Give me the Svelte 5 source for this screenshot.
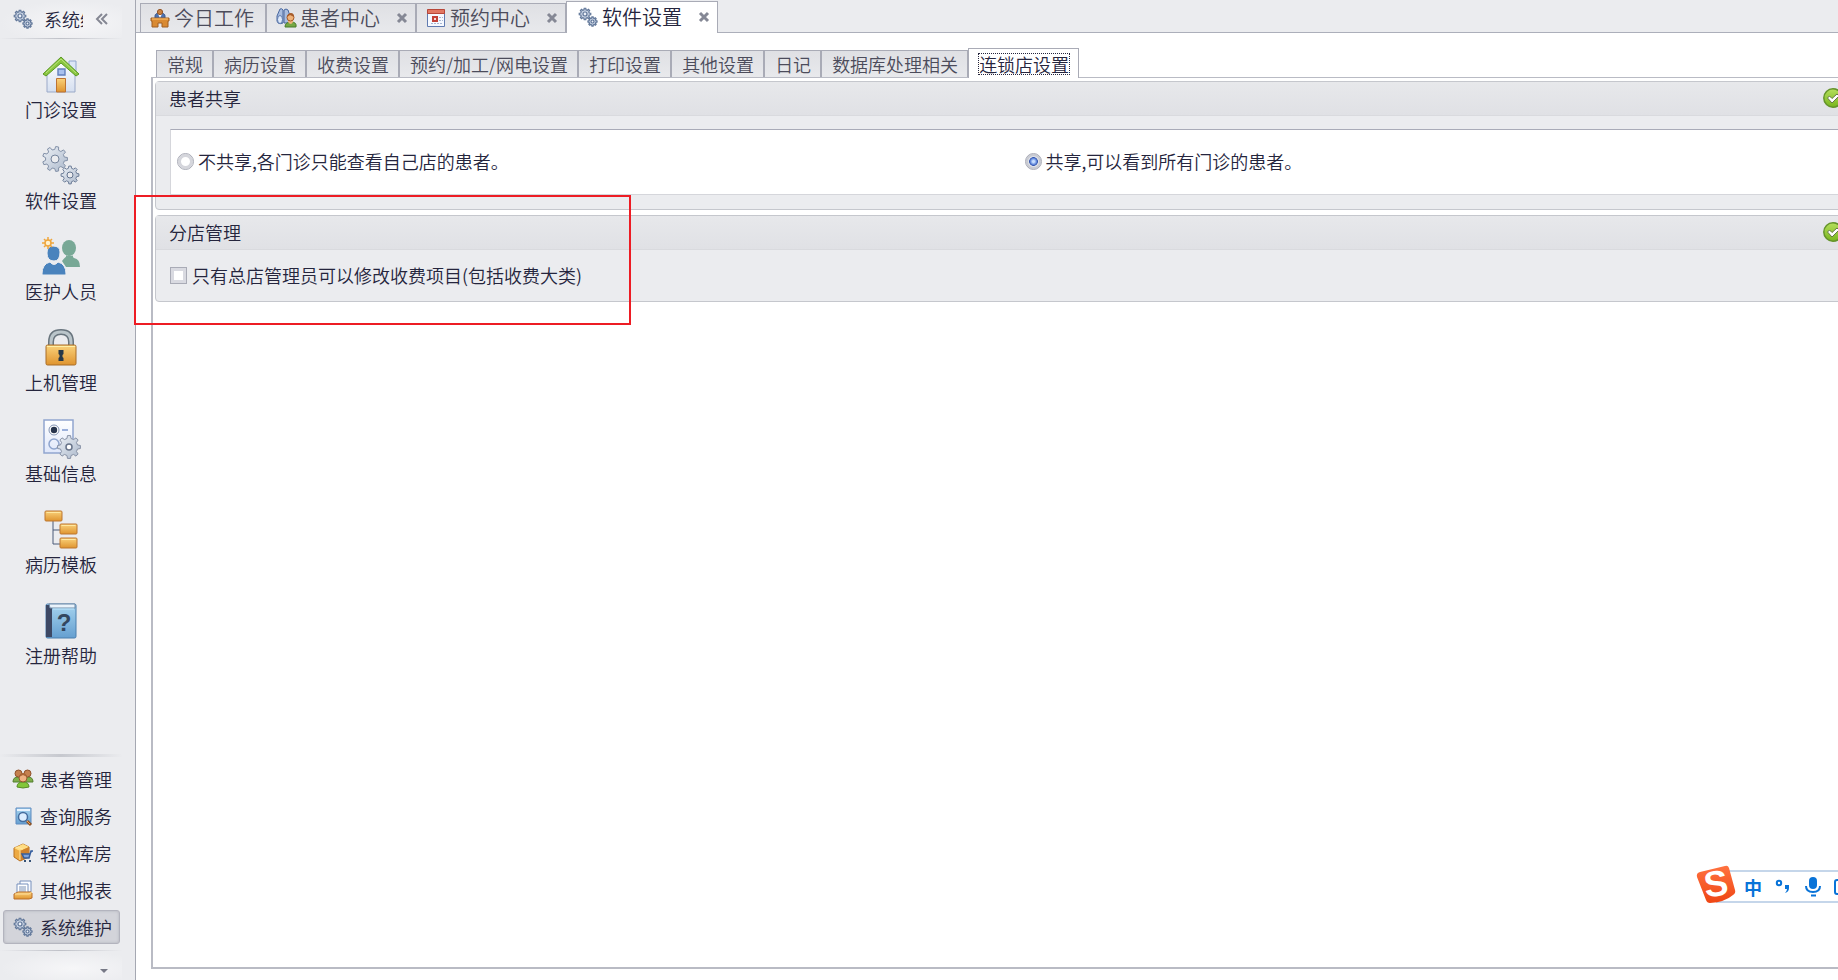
<script lang="ts">
  type Item = { id: string; label: string };
  type PageTab = Item & { icon: string; closable: boolean };

  const shortcuts: Item[] = [
    { id: "house", label: "门诊设置" },
    { id: "gears", label: "软件设置" },
    { id: "staff", label: "医护人员" },
    { id: "lock", label: "上机管理" },
    { id: "form", label: "基础信息" },
    { id: "tree", label: "病历模板" },
    { id: "book", label: "注册帮助" },
  ];

  const modules: Item[] = [
    { id: "people", label: "患者管理" },
    { id: "search", label: "查询服务" },
    { id: "box", label: "轻松库房" },
    { id: "tray", label: "其他报表" },
    { id: "cogs", label: "系统维护" },
  ];

  const pages: PageTab[] = [
    { id: "today", icon: "desk", label: "今日工作", closable: false },
    { id: "patients", icon: "finder", label: "患者中心", closable: true },
    { id: "booking", icon: "calendar", label: "预约中心", closable: true },
    { id: "software", icon: "cogs", label: "软件设置", closable: true },
  ];

  const sections = [
    "常规",
    "病历设置",
    "收费设置",
    "预约/加工/网电设置",
    "打印设置",
    "其他设置",
    "日记",
    "数据库处理相关",
    "连锁店设置",
  ];

  let activeModule = $state("cogs");
  let activePage = $state("software");
  let activeSection = $state("连锁店设置");
  let sharing = $state("all");
  let adminOnly = $state(false);

  const moduleTitle = $derived(modules.find((m) => m.id === activeModule)?.label ?? "");

  // closed outline of a cog wheel
  function gear(cx: number, cy: number, r: number, teeth = 8) {
    const points: string[] = [];
    const step = (Math.PI * 2) / teeth;
    for (let i = 0; i < teeth; i++) {
      for (const [offset, radius] of [[-0.3, 0.76], [-0.17, 1], [0.17, 1], [0.3, 0.76]]) {
        const a = (i + offset) * step;
        points.push(`${(cx + Math.cos(a) * r * radius).toFixed(2)} ${(cy + Math.sin(a) * r * radius).toFixed(2)}`);
      }
    }
    return `M${points.join("L")}Z`;
  }
</script>

{#snippet icon(id: string)}
  {#if id === "house"}
    <svg class="icon-lg" viewBox="0 0 38 38" aria-hidden="true">
      <path d="M27 6h7v14h-7z" fill="#dce6f6" stroke="#8fa6cf" />
      <path d="M5 18 19 5l14 13v19H5z" fill="url(#wall)" stroke="#9aa9c8" />
      <path d="M1 19 19 2l18 17-3 2L19 8 4 21z" fill="#8ac63f" stroke="#5c9a25" />
      <path d="m4 18 15-14 15 14" fill="none" stroke="#b9e47c" />
      <path d="M16 14h7v6h-7z" fill="#a9c1ee" stroke="#6380bd" stroke-width="1.4" />
      <path d="M14.500 23.500h9V37h-9z" fill="url(#gold)" stroke="#bd7333" />
    </svg>
  {:else if id === "gears"}
    <svg class="icon-lg" viewBox="0 0 38 38" aria-hidden="true">
      <path d={gear(13, 13, 12.5, 9)} fill="url(#steel)" stroke="#8391a8" />
      <circle cx="13" cy="13" r="4" fill="#ebecef" stroke="#75849c" />
      <path d={gear(28, 29, 9, 8)} fill="url(#steel)" stroke="#6f7f99" />
      <circle cx="28" cy="29" r="3" fill="#ebecef" stroke="#63738e" />
    </svg>
  {:else if id === "staff"}
    <svg class="icon-lg" viewBox="0 0 38 38" aria-hidden="true">
      <ellipse cx="27" cy="11" rx="7" ry="8" fill="#78a896" />
      <path d="M20 24q7-9 12-3 6 1 6 9H24z" fill="#78a896" />
      <path d="M24 18q4 5 7 0v6h-7z" fill="#78a896" />
      <g stroke="#ebecef">
        <path d="M0 37q0-10 8-12 4 5 8 0 8 2 8 12 0 1-1 1H1q-1 0-1-1z" fill="#4a83bd" />
        <path d="M5 16q0-7 6-7 7 0 7 6 0 9-6 9-7 0-7-8z" fill="#4a83bd" />
      </g>
      <path d="M6 0v12M0 6h12M2 2l8 8M10 2 2 10" stroke="#efa63d" stroke-width="1.500" />
      <circle cx="6" cy="6" r="3" fill="#fff2cf" stroke="#efa63d" stroke-width="1.500" />
    </svg>
  {:else if id === "lock"}
    <svg class="icon-lg" viewBox="0 0 38 38" aria-hidden="true">
      <path d="M9 19v-5q0-10 10-10t10 10v5" fill="none" stroke="#68747d" stroke-width="6" />
      <path d="M9 19v-5q0-10 10-10t10 10v5" fill="none" stroke="#bac5ca" stroke-width="3" />
      <rect x="4" y="17" width="30" height="20" rx="1.500" fill="url(#gold)" stroke="#a86d28" />
      <path d="M5 18.500h28" stroke="#fff0a6" />
      <path d="M16.500 22h5v4l-1 1v2l1 1v3h-5v-3l1-1v-2l-1-1z" fill="#263848" />
    </svg>
  {:else if id === "form"}
    <svg class="icon-lg" viewBox="0 0 38 38" aria-hidden="true">
      <path d="M2 1h29v33H2z" fill="url(#paper)" stroke="#91a5cf" stroke-width="1.500" />
      <circle cx="12" cy="11" r="5" fill="#fff" stroke="#8192b2" />
      <circle cx="12" cy="11" r="3.200" fill="#28354d" />
      <circle cx="12" cy="25" r="5" fill="none" stroke="#8ea4cd" stroke-width="1.500" />
      <path d="M20 11h6" stroke="#7d98cf" stroke-width="1.500" />
      <path d={gear(27, 28, 11.5, 8)} fill="url(#steel)" stroke="#8791a5" />
      <circle cx="27" cy="28" r="3" fill="#fff" stroke="#68748a" stroke-width="1.500" />
    </svg>
  {:else if id === "tree"}
    <svg class="icon-lg" viewBox="0 0 38 38" aria-hidden="true">
      <path d="M11 11v23h8M11 20h8" fill="none" stroke="#4b5b78" />
      <g fill="url(#gold)" stroke="#bd7730">
        <rect x="3" y="1" width="17" height="10" rx="1" />
        <rect x="18" y="14" width="17" height="10" rx="1" />
        <rect x="18" y="28" width="17" height="10" rx="1" />
      </g>
      <path d="M4.500 2.500h14M19.500 15.500h14M19.500 29.500h14" stroke="#ffe8a0" />
    </svg>
  {:else if id === "book"}
    <svg class="icon-lg" viewBox="0 0 38 38" aria-hidden="true">
      <rect x="4" y="3" width="30" height="34" rx="1.500" fill="url(#sky)" stroke="#4b7eae" />
      <path d="M4 4h6v32H4z" fill="#3d4864" />
      <path d="M7 3h26v4H8z" fill="#e9f3fb" stroke="#718ca9" />
      <path d="M11 8h21" stroke="#bce6fb" />
      <text x="22" y="30" class="question">?</text>
    </svg>
  {:else if id === "cogs"}
    <svg class="icon-sm" viewBox="0 0 20 20" aria-hidden="true">
      <g fill="#c6d1e2" stroke="#617799" stroke-width="1.200">
        <path d={gear(7, 7, 5.8, 8)} />
        <path d={gear(14.5, 14.5, 4.6, 8)} />
        <circle cx="7" cy="7" r="2" fill="#edf1f8" />
        <circle cx="14.500" cy="14.500" r="1.500" fill="#edf1f8" />
      </g>
    </svg>
  {:else if id === "desk"}
    <svg class="icon-sm" viewBox="0 0 20 20" aria-hidden="true">
      <path d="M5 11V8q0-3 5-3t5 3v3z" fill="#4c72af" stroke="#3c588b" />
      <path d="m8 6 2 4 2-4z" fill="#fff" />
      <circle cx="10" cy="4" r="2.600" fill="#ca8140" stroke="#935323" />
      <path d="M1 10h18v3h-1v6h-6v-4H8v4H2v-6H1z" fill="#d98a32" stroke="#a05f22" />
      <path d="M2 11h16" stroke="#ffc46f" />
    </svg>
  {:else if id === "finder"}
    <svg class="icon-sm" viewBox="0 0 20 20" aria-hidden="true">
      <path d="M1 8 4 1q2-1 3 1v13q-5 2-6-2zM8 2q2-2 4 0l2 6v7H8z" fill="#a9bddf" stroke="#48679f" />
      <ellipse cx="4" cy="11.500" rx="2.500" ry="4" fill="#dde9fa" stroke="#5b78ac" />
      <path d="M9 19q0-5 6-5t5 5z" fill="#75a744" stroke="#467b2a" />
      <path d="M12 14q3 4 5 0v-3h-5z" fill="#f0b47c" />
      <circle cx="14.500" cy="9.500" r="3.500" fill="#f0b37a" stroke="#a55a27" />
      <path d="M11 9q1-4 4-4t3 4l-4-2z" fill="#a65d2c" />
    </svg>
  {:else if id === "calendar"}
    <svg class="icon-sm" viewBox="0 0 20 20" aria-hidden="true">
      <path d="M1.500 2h17v16.500h-17z" fill="#f6f9ff" stroke="#607bb0" />
      <path d="M1.500 1.500h17v4h-17z" fill="#e27762" stroke="#b84739" />
      <path d="M5 15.500h11M13 9.500h4M13 12.500h4" stroke="#a7b7d4" stroke-dasharray="2 1" />
      <rect x="6" y="8" width="6" height="6" fill="#c34137" />
      <path d="M8.500 10.500h1v1h-1z" fill="#fff" stroke="#fff" />
    </svg>
  {:else if id === "people"}
    <svg class="icon-sm" viewBox="0 0 20 20" aria-hidden="true">
      <path d="M0 13q0-5 5-5t5 5zM10 13q0-5 5-5t5 5z" fill="#7eae4b" stroke="#537e2f" />
      <circle cx="5.500" cy="4.500" r="3.500" fill="#c5804f" stroke="#8f512b" />
      <circle cx="14.500" cy="4.500" r="3.500" fill="#c5804f" stroke="#8f512b" />
      <path d="M4 18q0-5 6-5t6 5q-6 2-12 0z" fill="#82c638" stroke="#568b27" />
      <circle cx="10" cy="9" r="4" fill="#efb182" stroke="#96572f" />
      <path d="M6 8q1-4 4-4t4 4l-4-2z" fill="#aa6638" />
    </svg>
  {:else if id === "search"}
    <svg class="icon-sm" viewBox="0 0 20 20" aria-hidden="true">
      <path d="M3 2h15v16H3z" fill="url(#sky)" stroke="#5e8bc0" />
      <path d="M4 3h13v2H4z" fill="#e8f4ff" />
      <circle cx="10" cy="11" r="4.500" fill="#dceeff" stroke="#456d9e" stroke-width="1.500" />
      <path d="m14 15 4 4" stroke="#8e5326" stroke-width="3" />
      <path d="m14 15 3 3" stroke="#f0a35c" />
    </svg>
  {:else if id === "box"}
    <svg class="icon-sm" viewBox="0 0 20 20" aria-hidden="true">
      <path d="m1 5 9-4 6 3v10l-9 4-6-4z" fill="#edaa43" stroke="#b97121" />
      <path d="m1 5 9-4 6 3-9 4z" fill="#ffdd83" />
      <path d="m7 8 9-4v10l-9 4z" fill="#ce812c" />
      <path d="m3 4 7 2M7 8v9" stroke="#ffe7a0" />
      <path d="M20 8h-2l-2 7h-5l-2-4h8" fill="#7fa3da" stroke="#365d9c" stroke-width="1.500" />
      <path d="M11 17h2v2h-2zM16 17h2v2h-2z" fill="#365276" />
    </svg>
  {:else if id === "tray"}
    <svg class="icon-sm" viewBox="0 0 20 20" aria-hidden="true">
      <path d="M7 1h11v11H7z" fill="#f8faff" stroke="#7790bc" />
      <path d="M4 4h11v10H4z" fill="#fff" stroke="#7790bc" />
      <path d="M6 7h7M6 9h7M6 11h7" stroke="#7990b6" />
      <path d="m1 14 4-2h13l1 1v5l-3 1H1z" fill="url(#gold)" stroke="#bb6f2b" />
      <path d="M2 14h14l3-2" fill="none" stroke="#ffdc99" />
    </svg>
  {/if}
{/snippet}

{#snippet confirmButton(label: string)}
  <button class="confirm-btn" aria-label={label}>
    <svg viewBox="0 0 20 20" aria-hidden="true">
      <circle cx="10" cy="10" r="9.200" fill="url(#green)" stroke="#65942b" stroke-width="1.500" />
      <path d="m4.500 10 2-2 2.500 2.500L14 6l2 2-7 7z" fill="#fff" stroke="#657746" />
    </svg>
  </button>
{/snippet}

<svg class="defs" aria-hidden="true">
  <defs>
    <linearGradient id="wall" x2="0" y2="1"><stop stop-color="#fff" /><stop offset="1" stop-color="#d5dff0" /></linearGradient>
    <linearGradient id="gold" x2="0" y2="1"><stop stop-color="#fad27b" /><stop offset="1" stop-color="#df942f" /></linearGradient>
    <linearGradient id="steel" x2="1" y2="1"><stop stop-color="#edf1f6" /><stop offset="1" stop-color="#abb8cb" /></linearGradient>
    <linearGradient id="paper" x2="0" y2="1"><stop stop-color="#fff" /><stop offset="1" stop-color="#dfe7fa" /></linearGradient>
    <linearGradient id="sky" x2="0" y2="1"><stop stop-color="#a6d4ef" /><stop offset="1" stop-color="#659fd0" /></linearGradient>
    <linearGradient id="green" x2="0" y2="1"><stop stop-color="#b5df5c" /><stop offset="1" stop-color="#79b51e" /></linearGradient>
    <linearGradient id="orange" x2="0" y2="1"><stop stop-color="#ff7240" /><stop offset="1" stop-color="#ef4614" /></linearGradient>
  </defs>
</svg>

<div class="app">
  <aside class="sidebar">
    <header class="side-header">
      {@render icon("cogs")}
      <span class="side-title">{moduleTitle}</span>
      <button class="collapse-btn" aria-label="收起">
        <svg viewBox="0 0 12 12" aria-hidden="true"><path d="M6 1 1 6l5 5M11 1 6 6l5 5" /></svg>
      </button>
    </header>

    <nav class="shortcuts">
      {#each shortcuts as item (item.id)}
        <button class="shortcut">
          {@render icon(item.id)}
          <span>{item.label}</span>
        </button>
      {/each}
    </nav>

    <nav class="modules">
      {#each modules as item (item.id)}
        <button class="module" class:active={activeModule === item.id} onclick={() => (activeModule = item.id)}>
          {@render icon(item.id)}
          <span>{item.label}</span>
        </button>
      {/each}
    </nav>
    <footer class="side-footer">
      <button class="more-btn" aria-label="更多"></button>
    </footer>
  </aside>

  <main class="main">
    <div class="page-tabs">
      {#each pages as page (page.id)}
        <div class="page-tab" class:active={activePage === page.id}>
          <button class="page-name" onclick={() => (activePage = page.id)}>
            {@render icon(page.icon)}
            <span>{page.label}</span>
          </button>
          {#if page.closable}
            <button class="close-btn" aria-label="关闭{page.label}">
              <svg viewBox="0 0 12 12" aria-hidden="true"><path d="m2 2 8 8M10 2l-8 8" /></svg>
            </button>
          {/if}
        </div>
      {/each}
    </div>

    <div class="workspace">
      <div class="section-tabs" role="tablist">
        {#each sections as name (name)}
          <button
            class="section-tab"
            class:active={activeSection === name}
            role="tab"
            aria-selected={activeSection === name}
            onclick={() => (activeSection = name)}
          >
            <span>{name}</span>
          </button>
        {/each}
      </div>

      <div class="panel">
        <section class="group">
          <header class="group-header">
            <h2>患者共享</h2>
            {@render confirmButton("保存患者共享")}
          </header>
          <div class="radio-box">
            <label class="choice">
              <input type="radio" name="sharing" value="own" bind:group={sharing} />
              <span>不共享,各门诊只能查看自己店的患者。</span>
            </label>
            <label class="choice">
              <input type="radio" name="sharing" value="all" bind:group={sharing} />
              <span>共享,可以看到所有门诊的患者。</span>
            </label>
          </div>
        </section>

        <section class="group">
          <header class="group-header">
            <h2>分店管理</h2>
            {@render confirmButton("保存分店管理")}
          </header>
          <label class="check-row">
            <input type="checkbox" bind:checked={adminOnly} />
            <span>只有总店管理员可以修改收费项目(包括收费大类)</span>
          </label>
        </section>
      </div>
    </div>
  </main>

  <div class="highlight"></div>

  <div class="ime-bar">
    <svg class="ime-logo" viewBox="0 0 40 40" aria-hidden="true">
      <path d="M4 7 29 1q3-1 4 2l6 22q1 3-2 5-8 7-23 8-3 0-4-3L1 12q-1-4 3-5z" fill="url(#orange)" />
      <text x="20" y="31" transform="rotate(-8 20 20)" class="ime-s">S</text>
    </svg>
    <button class="ime-lang">中</button>
    <button class="ime-btn" aria-label="标点">
      <svg viewBox="0 0 18 20" aria-hidden="true">
        <circle cx="5" cy="6" r="2.200" fill="none" stroke="#0873d8" stroke-width="2" />
        <path d="M11 8h4v3q0 4-4 5 2-2 2-4h-2z" fill="#0873d8" />
      </svg>
    </button>
    <button class="ime-btn" aria-label="语音">
      <svg viewBox="0 0 18 20" aria-hidden="true">
        <rect x="5" y="0" width="8" height="12" rx="4" fill="#0873d8" />
        <path d="M2 9q0 6 7 6t7-6" fill="none" stroke="#0873d8" stroke-width="2" />
        <path d="M7 18.500h5" stroke="#0873d8" stroke-width="2" />
      </svg>
    </button>
    <button class="ime-btn" aria-label="键盘">
      <svg viewBox="0 0 18 20" aria-hidden="true">
        <rect x="1" y="3" width="20" height="14" rx="2" fill="none" stroke="#0873d8" stroke-width="2" />
        <path d="M4 7h12M4 10h12M4 13h12" stroke="#0873d8" stroke-width="1.500" />
      </svg>
    </button>
  </div>
</div>

<style>
  :global(body) {
    margin: 0;
    background: #fff;
  }

  .app {
    position: relative;
    display: flex;
    min-height: 100vh;
    overflow: hidden;
    font-family: "Noto Sans CJK SC", sans-serif;
    font-size: 18px;
    font-weight: 350;
    line-height: 24px;
    color: #25253d;
  }

  button {
    margin: 0;
    padding: 0;
    border: 0;
    background: none;
    color: inherit;
    font: inherit;
    white-space: nowrap;
    cursor: pointer;
  }

  svg {
    display: block;
    overflow: visible;
    flex-shrink: 0;
  }

  .defs {
    position: absolute;
    width: 0;
    height: 0;
  }

  .icon-lg {
    width: 38px;
    height: 38px;
  }

  .icon-sm {
    width: 20px;
    height: 20px;
  }

  .question {
    font: bold 24px "Liberation Sans", sans-serif;
    text-anchor: middle;
    fill: #34475f;
  }

  .sidebar {
    display: flex;
    flex-direction: column;
    flex-shrink: 0;
    box-sizing: border-box;
    width: 136px;
    padding-right: 13px;
    border-right: 1px solid #a5a8b2;
    background: #ebecef;
  }

  .side-header {
    display: flex;
    align-items: center;
    height: 38px;
    padding-left: 13px;
    border-bottom: 1px solid;
    border-image: linear-gradient(to right, #ebecef, #bfc1c8 50%, #ebecef) 1;
    background: radial-gradient(ellipse at 60% 60%, #f6f6f8, #ebecef 70%);
  }

  .side-title {
    width: 39px;
    margin-left: 11px;
    overflow: hidden;
    white-space: nowrap;
  }

  .collapse-btn {
    margin-left: 13px;
  }

  .collapse-btn svg {
    width: 12px;
    height: 12px;
    fill: none;
    stroke: #858793;
    stroke-width: 2;
  }

  .shortcuts {
    display: flex;
    flex-direction: column;
    padding-top: 16px;
  }

  .shortcut {
    display: flex;
    flex-direction: column;
    align-items: center;
    gap: 4px;
    height: 91px;
  }

  .modules {
    display: flex;
    flex-direction: column;
    gap: 3px;
    margin-top: auto;
    padding: 5px 2px 0 3px;
    border-top: 3px double;
    border-image: linear-gradient(to right, #ebecef, #c6c8ce 50%, #ebecef) 1;
  }

  .module {
    display: flex;
    align-items: center;
    gap: 7px;
    box-sizing: border-box;
    height: 34px;
    padding-left: 9px;
    border: 1px solid transparent;
    border-radius: 3px;
  }

  .module.active {
    border-color: #b3b4be;
    background: #d3d4da;
    box-shadow: inset 0 0 3px #b1b2bb;
  }

  .side-footer {
    display: flex;
    justify-content: flex-end;
    align-items: flex-end;
    box-sizing: border-box;
    height: 30px;
    margin-top: 6px;
    padding: 0 14px 7px 0;
    border-top: 1px solid;
    border-image: linear-gradient(to right, #ebecef, #bfc1c8 50%, #ebecef) 1;
    background: radial-gradient(ellipse at 60% 60%, #f6f6f8, #ebecef 70%);
  }

  .more-btn {
    border: 4px solid transparent;
    border-top-color: #777986;
    border-bottom: 0;
  }

  .main {
    display: flex;
    flex-direction: column;
    flex: 1;
    min-width: 0;
  }

  .page-tabs {
    display: flex;
    align-items: flex-end;
    box-sizing: border-box;
    height: 33px;
    padding-left: 4px;
    border-bottom: 1px solid #acafba;
    background: #ebecef;
  }

  .page-tab {
    display: flex;
    align-items: center;
    flex-shrink: 0;
    gap: 16px;
    box-sizing: border-box;
    height: 29px;
    padding: 0 7px 1px 9px;
    border: 1px solid #a9abb6;
    border-bottom: 0;
    background: linear-gradient(#dfe0e4, #e8e9ec);
    font-size: 20px;
    color: #4c4c5b;
  }

  .page-tab:first-child {
    padding-right: 11px;
  }

  .page-tab.active {
    height: 32px;
    margin-bottom: -1px;
    padding-left: 11px;
    background: #fff;
    color: #25253d;
  }

  .page-name {
    display: flex;
    align-items: center;
    gap: 4px;
  }

  .close-btn svg {
    width: 12px;
    height: 12px;
    fill: none;
    stroke: #858895;
    stroke-width: 3;
  }

  .workspace {
    display: flex;
    flex-direction: column;
    flex: 1;
    margin-right: -16px;
    padding: 15px 0 11px 15px;
  }

  .section-tabs {
    display: flex;
    align-items: flex-end;
    height: 29px;
    padding-left: 5px;
  }

  .section-tab {
    flex-shrink: 0;
    box-sizing: border-box;
    height: 27px;
    padding: 0 9px 0 10px;
    border: 1px solid #a9abb6;
    border-bottom: 0;
    background: linear-gradient(#dfe0e4, #e8e9ec);
    color: #4c4c5b;
  }

  .section-tab.active {
    position: relative;
    height: 30px;
    margin-bottom: -1px;
    background: #fff;
    color: #25253d;
  }

  .section-tab span {
    display: block;
    line-height: 20px;
  }

  .section-tab.active span {
    outline: 1px dotted #25253d;
  }

  .panel {
    display: flex;
    flex-direction: column;
    flex: 1;
    gap: 5px;
    padding: 3px 2px 0;
    border: 2px solid #b9bbc4;
    border-top-width: 1px;
  }

  .group {
    border: 1px solid #c5c7cd;
    border-radius: 4px;
    background: #ebecef;
  }

  .group-header {
    display: flex;
    align-items: center;
    justify-content: space-between;
    box-sizing: border-box;
    height: 34px;
    padding: 0 6px 1px 13px;
    border-bottom: 1px solid #d9dade;
    background: linear-gradient(#e7e8eb, #e0e1e5);
  }

  h2 {
    margin: 0;
    font: inherit;
  }

  .confirm-btn svg {
    width: 20px;
    height: 20px;
  }

  .radio-box {
    display: grid;
    grid-template-columns: 1fr 1fr;
    column-gap: 34px;
    align-items: center;
    box-sizing: border-box;
    height: 66px;
    margin: 13px 10px 14px 14px;
    padding: 0 0 2px 6px;
    border: 1px solid #d5d6db;
    border-top-color: #a9abb8;
    background: #fff;
  }

  .choice,
  .check-row {
    display: flex;
    align-items: center;
  }

  .choice {
    gap: 4px;
  }

  .check-row {
    gap: 5px;
    padding: 13px 0 14px 14px;
  }

  input {
    appearance: none;
    flex-shrink: 0;
    box-sizing: border-box;
    width: 17px;
    height: 17px;
    margin: 0;
    border: 1px solid #a9abb6;
    background: #fff;
  }

  input[type="radio"] {
    border-radius: 50%;
    box-shadow: inset 0 0 0 3px #d5d6dc;
  }

  input[type="radio"]:checked {
    background: radial-gradient(circle at 50% 50%, #c4dcff 10%, #5b82d8 30%, #3556ae 38%, #e1e3ea 44%);
    box-shadow: inset 0 0 0 2px #c9cbd2;
  }

  input[type="checkbox"] {
    box-shadow: inset 0 0 0 3px #d9dae1;
  }

  input[type="checkbox"]:checked {
    background: #3556ae;
  }

  .highlight {
    position: absolute;
    top: 195px;
    left: 134px;
    box-sizing: border-box;
    width: 497px;
    height: 130px;
    border: 2px solid #ed1c24;
    pointer-events: none;
  }

  .ime-bar {
    position: absolute;
    right: -14px;
    bottom: 77px;
    display: flex;
    align-items: center;
    gap: 12px;
    box-sizing: border-box;
    height: 33px;
    border: 1px solid #c5d6ea;
    border-width: 2px 0;
    background: #fff;
  }

  .ime-logo {
    width: 40px;
    height: 40px;
    margin: 0 -4px 4px -20px;
  }

  .ime-s {
    font: bold 36px "Liberation Sans", sans-serif;
    text-anchor: middle;
    fill: #fff;
  }

  .ime-lang {
    font-size: 18px;
    font-weight: 700;
    color: #0873d8;
  }

  .ime-btn svg {
    width: 18px;
    height: 20px;
  }
</style>
